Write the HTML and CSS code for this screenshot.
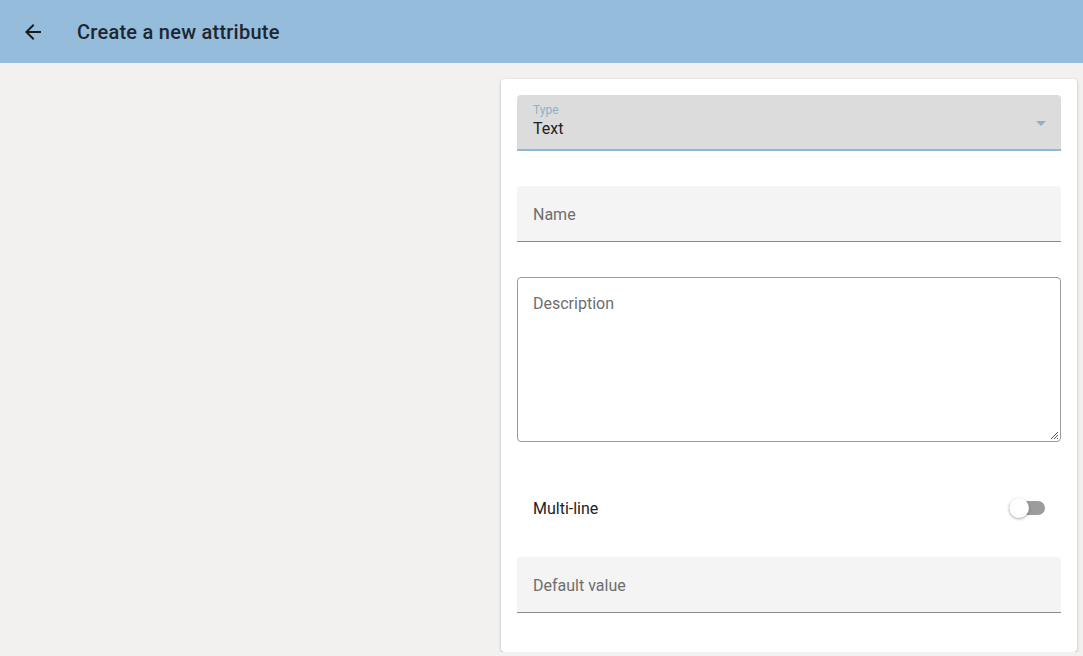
FILE: index.html
```html
<!DOCTYPE html>
<html lang="en">
<head>
    <meta charset="UTF-8">
    <meta name="viewport" content="width=device-width, initial-scale=1.0">
    <title>Create a new attribute</title>
    <link rel="stylesheet" href="styles.css">
</head>
<body>
    <header class="toolbar">
        <button class="back-btn" aria-label="Back">
            <svg width="24" height="24" viewBox="0 0 24 24">
                <path d="M20 11H7.83l5.59-5.59L12 4l-8 8 8 8 1.41-1.41L7.83 13H20v-2z" fill="#1b1b1b"/>
            </svg>
        </button>
        <h1 class="title">Create a new attribute</h1>
    </header>

    <main class="content">
        <div class="spacer"></div>
        <form class="card">
            <div class="field field-select">
                <span class="field-label">Type</span>
                <span class="field-value">Text</span>
                <span class="select-arrow"></span>
            </div>

            <div class="field field-fill">
                <span class="placeholder">Name</span>
            </div>

            <div class="field-outline">
                <span class="placeholder">Description</span>
                <svg class="grip" width="9" height="9" viewBox="0 0 9 9">
                    <path d="M8 1L1 8M8 4L4 8M8 7L7 8" stroke="#555" stroke-width="1"/>
                </svg>
            </div>

            <div class="toggle-row">
                <span>Multi-line</span>
                <span class="toggle">
                    <span class="toggle-track"></span>
                    <span class="toggle-thumb"></span>
                </span>
            </div>

            <div class="field field-fill">
                <span class="placeholder">Default value</span>
            </div>
        </form>
    </main>
</body>
</html>
```

FILE: styles.css
```css
* {
    box-sizing: border-box;
}
body {
    margin: 0;
    background: #f2f1ef;
    font-family: Roboto, "Liberation Sans", sans-serif;
    color: #222;
}
.toolbar {
    height: 63px;
    background: #95bcdb;
    display: flex;
    align-items: center;
    padding: 0 16px 0 21px;
}
.back-btn {
    width: 24px;
    height: 24px;
    padding: 0;
    border: none;
    background: none;
    display: flex;
}
.title {
    margin: 0 0 0 32px;
    font-size: 20px;
    font-weight: 500;
    color: #1e2630;
    letter-spacing: 0.25px;
}
.content {
    display: flex;
    padding: 16px 6px 0 0;
}
.spacer {
    flex: 1;
}
.card {
    width: 576px;
    height: 573px;
    background: #fff;
    border-radius: 4px;
    box-shadow: 0 1px 3px rgba(0, 0, 0, 0.25);
    padding: 16px 16px 0 16px;
}
.field {
    position: relative;
    height: 56px;
    border-radius: 4px 4px 0 0;
    padding: 0 16px;
    margin-bottom: 35px;
}
.field-select {
    background: #dcdcdc;
    border-bottom: 2px solid #8fb8d6;
}
.field-label {
    display: block;
    padding-top: 8px;
    font-size: 12px;
    line-height: 14px;
    color: #8fb0c9;
}
.field-value {
    display: block;
    margin-top: 2px;
    font-size: 16px;
    line-height: 20px;
    color: #222;
}
.select-arrow {
    position: absolute;
    right: 15px;
    top: 26px;
    border-left: 5px solid transparent;
    border-right: 5px solid transparent;
    border-top: 5px solid #8fb0c9;
}
.field-fill {
    background: #f4f4f4;
    border-bottom: 1px solid #8a8a8a;
    display: flex;
    align-items: center;
    padding-top: 1px;
}
.placeholder {
    font-size: 16px;
    color: #6e6e6e;
}
.field-outline {
    position: relative;
    height: 165px;
    border: 1px solid #9a9a9a;
    border-radius: 4px;
    padding: 16px 15px;
    margin-bottom: 39px;
}
.grip {
    position: absolute;
    right: 1px;
    bottom: 1px;
}
.toggle-row {
    display: flex;
    align-items: center;
    justify-content: space-between;
    height: 56px;
    padding: 0 16px 2px;
    margin-bottom: 20px;
    font-size: 16px;
    color: #222;
}
.toggle {
    position: relative;
    width: 36px;
    height: 20px;
}
.toggle-track {
    position: absolute;
    left: 0;
    top: 3px;
    width: 36px;
    height: 14px;
    border-radius: 7px;
    background: #9c9c9c;
}
.toggle-thumb {
    position: absolute;
    left: 0;
    top: 0;
    width: 20px;
    height: 20px;
    border-radius: 50%;
    background: #fff;
    box-shadow: 0 1px 3px rgba(0, 0, 0, 0.35);
}
```
